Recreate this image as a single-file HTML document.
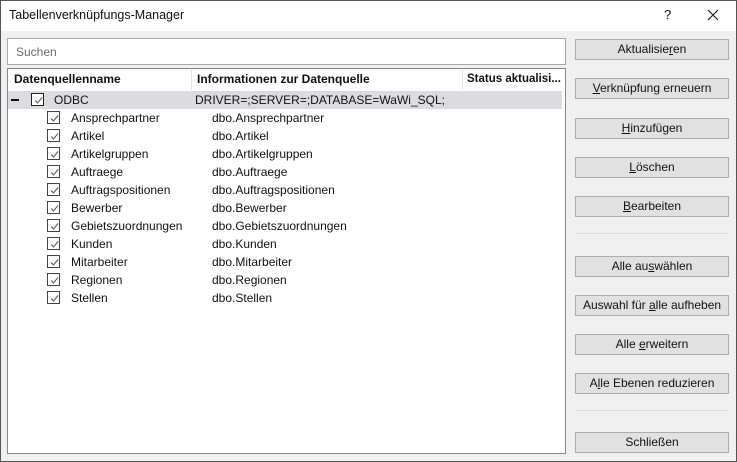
<!DOCTYPE html>
<html><head><meta charset="utf-8"><style>
*{margin:0;padding:0;box-sizing:border-box}
body{width:737px;height:462px;overflow:hidden;font-family:"Liberation Sans",sans-serif;font-size:12px;color:#111;background:#f0f0f0;position:relative}
.win{position:absolute;left:0;top:0;width:737px;height:462px;border:1px solid #555;background:#f0f0f0}
.title{position:absolute;left:0;top:0;width:735px;height:30px;background:#fff}
.t{position:absolute;white-space:nowrap}
.search{position:absolute;left:6px;top:37px;width:559px;height:27px;background:#fff;border:1px solid #a9a9a9}
.list{position:absolute;left:6px;top:67px;width:559px;height:386px;background:#fff;border:1px solid #828790}
.hdr{position:absolute;top:0;height:21px;font-weight:bold;line-height:21px;white-space:nowrap}
.sep{position:absolute;top:1px;width:1px;height:20px;background:#e5e5e5}
.odbc{position:absolute;left:0;top:22px;width:554px;height:18px;background:#dcdce0}
.cb{position:absolute;width:13px;height:13px;border:1px solid #333;background:#fff}
.cb svg{position:absolute;left:1px;top:1px}
.btn{position:absolute;left:574px;width:154px;height:21px;background:#e1e1e1;border:1px solid #adadad;text-align:center;line-height:19px}
.hr{position:absolute;left:574px;width:154px;height:1px;background:#ddd}
</style></head><body><div class="win">
<div class="title"></div>
<div class="t" style="left:8px;top:7px;font-size:12.5px">Tabellenverknüpfungs-Manager</div>
<div class="t" style="left:663px;top:6px;font-size:13px">?</div>
<svg style="position:absolute;left:706px;top:8px" width="12" height="12"><path d="M1 1L11 11M11 1L1 11" stroke="#222" stroke-width="1.2"/></svg>
<div class="search"><div class="t" style="left:8px;top:6px;color:#6d6d6d">Suchen</div></div>
<div class="list">
<div class="hdr" style="left:6px">Datenquellenname</div>
<div class="sep" style="left:183px"></div>
<div class="hdr" style="left:189px">Informationen zur Datenquelle</div>
<div class="sep" style="left:454px"></div>
<div class="hdr" style="left:459px;font-size:11.5px;width:100px">Status aktualisi...</div>
<div class="odbc"></div>
<div style="position:absolute;left:3px;top:30px;width:8px;height:2px;background:#111"></div>
<div class="cb" style="left:23px;top:24px;border-color:#222"><svg width="11" height="11"><path d="M2 5.5L4.5 8L9 2.5" stroke="#555" fill="none" stroke-width="1"/></svg></div>
<div class="t" style="left:46px;top:24px">ODBC</div>
<div class="t" style="left:187px;top:24px">DRIVER=;SERVER=;DATABASE=WaWi_SQL;</div>
<div id="rows"></div>
</div>
<div class="btn" style="top:38px">Aktualisie<u>r</u>en</div>
<div class="btn" style="top:77px"><u>V</u>erknüpfung erneuern</div>
<div class="btn" style="top:117px"><u>H</u>inzufügen</div>
<div class="btn" style="top:156px"><u>L</u>öschen</div>
<div class="btn" style="top:195px"><u>B</u>earbeiten</div>
<div class="hr" style="top:232px"></div>
<div class="btn" style="top:255px">Alle au<u>s</u>wählen</div>
<div class="btn" style="top:294px">Auswahl für <u>a</u>lle aufheben</div>
<div class="btn" style="top:333px">Alle <u>e</u>rweitern</div>
<div class="btn" style="top:372px">A<u>l</u>le Ebenen reduzieren</div>
<div class="hr" style="top:409px"></div>
<div class="btn" style="top:431px">Schließen</div>
</div>
<script>
var n=["Ansprechpartner","Artikel","Artikelgruppen","Auftraege","Auftragspositionen","Bewerber","Gebietszuordnungen","Kunden","Mitarbeiter","Regionen","Stellen"],h="";
n.forEach(function(s,i){var y=42+i*18;h+='<div class="cb" style="left:39px;top:'+(y)+'px;border-color:#444"><svg width="11" height="11"><path d="M2 5.5L4.5 8L9 2.5" stroke="#555" fill="none" stroke-width="1"/></svg></div><div class="t" style="left:63px;top:'+(y)+'px">'+s+'</div><div class="t" style="left:204px;top:'+(y)+'px">dbo.'+s+'</div>';});
document.getElementById("rows").innerHTML=h;
</script>
</body></html>
